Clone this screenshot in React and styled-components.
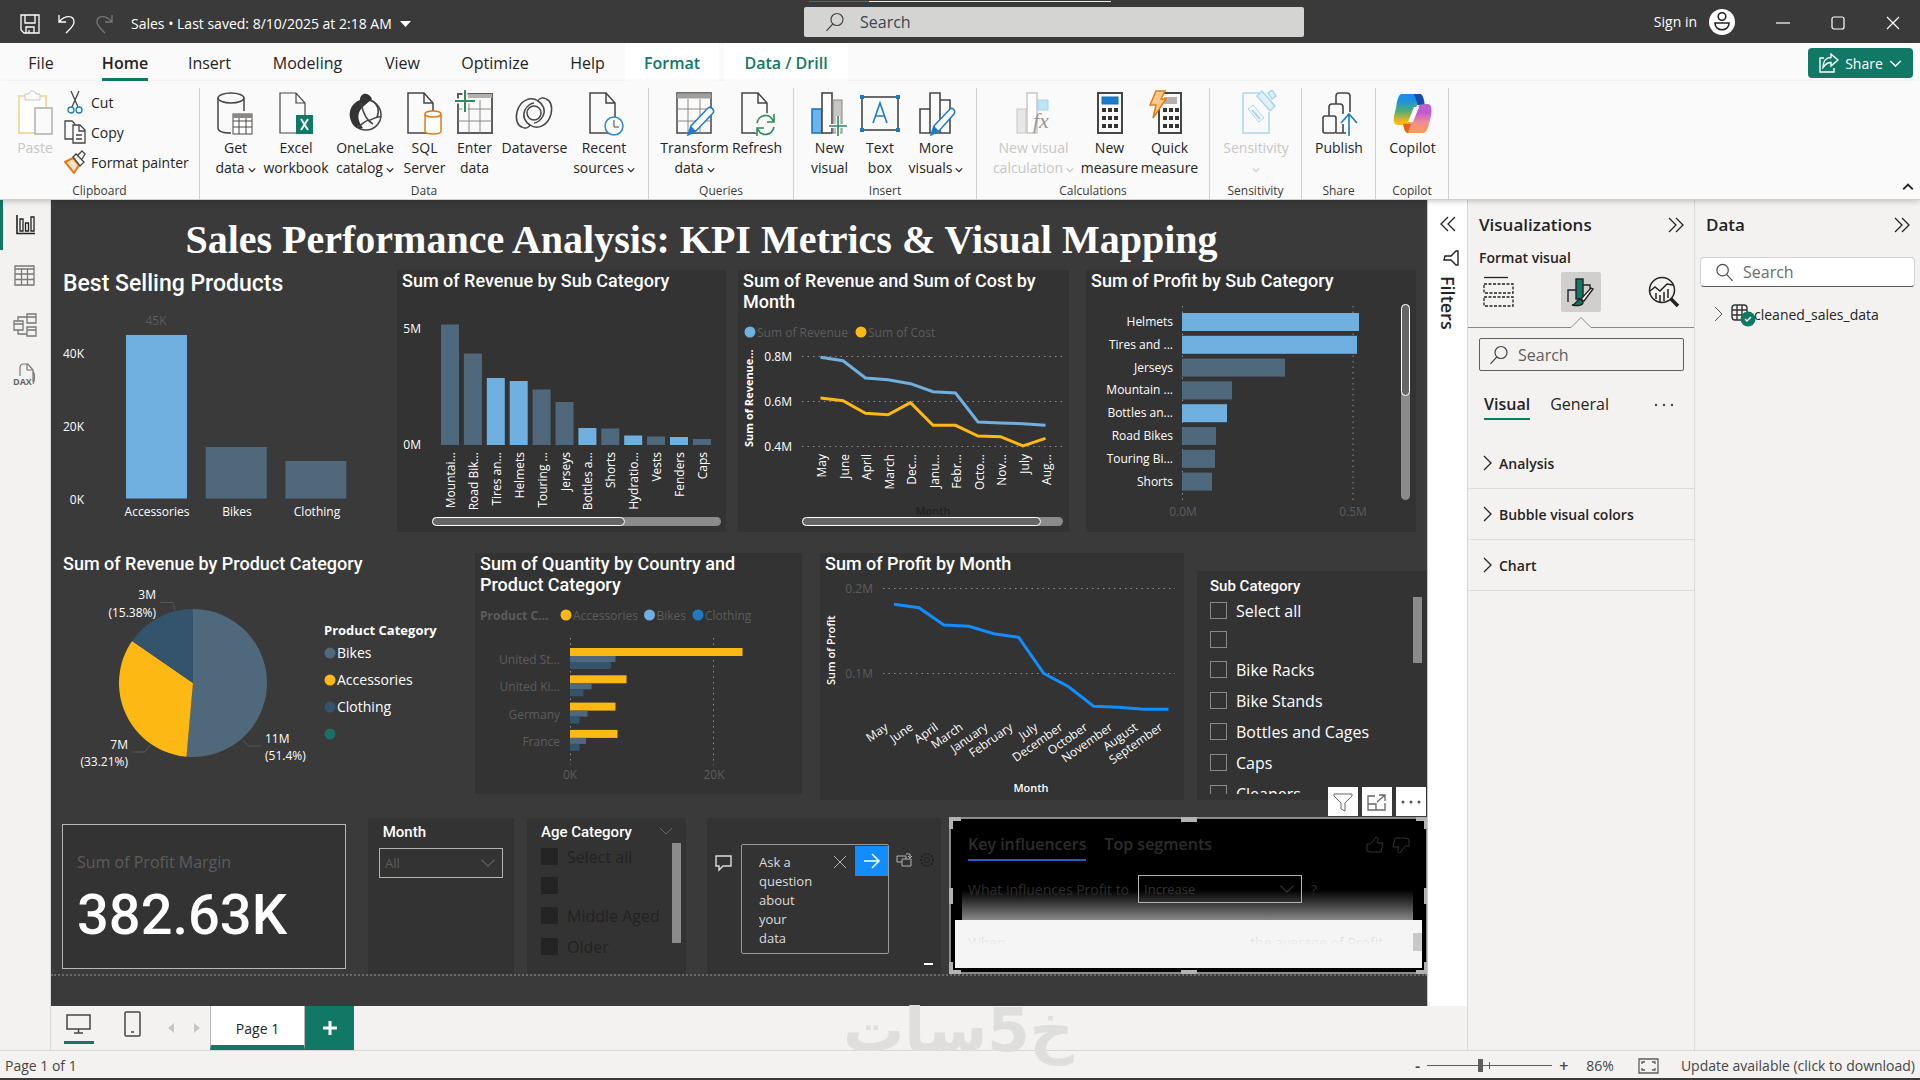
import React from "react";
import styled, { createGlobalStyle, css } from "styled-components";

const UI = '"Open Sans", "Noto Sans", sans-serif';
const DIN = 'Roboto, "Noto Sans", sans-serif';

const c = {
  ink: "#252423",
  green: "#117865",
  chrome: "#3a3a3a",
  pane: "#f3f2f1",
  line: "#d8d8d8",
  page: "#3a3a3a",
  panel: "#333333",
  dim: "#5c5c5c",
  light: "#70b0e0",
  dark: "#50687c",
  navy: "#34536c",
  gold: "#fdb813",
  blue: "#118dff",
};

const GlobalStyle = createGlobalStyle`
  * { box-sizing: border-box; }
  body { margin: 0; font-family: ${UI}; font-size: 14px; color: ${c.ink}; background: ${c.pane}; }
  button, input, select, textarea { font-family: inherit; color: inherit; margin: 0; }
  button { background: none; border: 0; padding: 0; cursor: pointer; }
  svg { display: block; flex: none; }
`;

const Shell = styled.div`
  min-height: 100vh;
  display: flex;
  flex-direction: column;
  border-bottom: 2px solid ${c.chrome};
`;

/* ---------- title bar ---------- */
const TitleBar = styled.header`
  height: 43px;
  background: ${c.chrome};
  color: #fff;
  display: grid;
  grid-template-columns: 804fr 500fr 616fr;
  align-items: center;
`;
const TitleLeft = styled.div`
  display: flex;
  align-items: center;
  padding: 4px 0 0 20px;
  gap: 17px;
`;
const IconButton = styled.button`
  display: flex;
  align-items: center;
  justify-content: center;
`;
const FileName = styled.button`
  display: flex;
  align-items: center;
  gap: 8px;
  font-size: 14px;
  white-space: nowrap;
`;
const TitleSearch = styled.label`
  height: 30px;
  background: #d4d4d2;
  border-radius: 2px;
  display: flex;
  align-items: center;
  padding-left: 21px;
  gap: 13px;
  position: relative;
  color: ${c.ink};
`;
const LoadStripe = styled.span`
  position: absolute;
  left: 5px;
  top: -6px;
  width: 302px;
  height: 1px;
  background: linear-gradient(90deg, #1a76c4 60px, #e8f0ee 60px);
`;
const BareInput = styled.input`
  flex: 1;
  min-width: 0;
  border: 0;
  outline: 0;
  background: transparent;
  font-size: 16px;
  &::placeholder { color: ${(p) => p.$hint || "#3b4654"}; opacity: 1; }
`;
const TitleRight = styled.div`
  display: flex;
  align-items: center;
  justify-content: flex-end;
  padding-right: 20px;
`;
const SignIn = styled.button`
  display: flex;
  align-items: center;
  gap: 12px;
  font-size: 14px;
  margin-right: 41px;
`;
const WindowButtons = styled.div`
  display: flex;
  gap: 41px;
  padding-top: 3px;
`;

/* ---------- ribbon ---------- */
const TabRow = styled.nav`
  height: 38px;
  background: #fafafa;
  display: flex;
  padding: 0 7px 0 1px;
`;
const Tab = styled.button`
  width: ${(p) => p.$w}px;
  font-size: 16px;
  display: flex;
  justify-content: center;
  span { padding-top: 8px; line-height: 24px; height: 38px; }
  ${(p) => p.$active && css`
    font-weight: 600;
    span { border-bottom: 3px solid ${c.green}; }
  `}
  ${(p) => p.$context && css`
    font-weight: 600;
    color: ${c.green};
    background: #fff;
    margin-right: 5px;
  `}
`;
const ShareButton = styled.button`
  margin: 5px 0 0 auto;
  align-self: flex-start;
  width: 105px;
  height: 30px;
  border-radius: 4px;
  background: ${c.green};
  color: #fff;
  font-size: 14px;
  display: flex;
  align-items: center;
  justify-content: center;
  gap: 6px;
`;
const Ribbon = styled.section`
  height: 119px;
  background: #fafafa;
  border-bottom: 1px solid #d0d0d0;
  display: flex;
  position: relative;
  z-index: 2;
  box-shadow: 0 2px 5px rgba(0, 0, 0, 0.18);
`;
const Group = styled.div`
  width: ${(p) => p.$w}px;
  margin-top: 7px;
  border-right: 1px solid #d0d0d0;
  display: flex;
  flex-direction: column;
  justify-content: space-between;
`;
const GroupBody = styled.div`
  display: flex;
  padding: 2px 0 0 10px;
`;
const GroupName = styled.div`
  font-size: 12px;
  line-height: 16px;
  text-align: center;
  color: #3b3a39;
`;
const Tool = styled.button`
  width: ${(p) => p.$w}px;
  display: flex;
  flex-direction: column;
  align-items: center;
  font-size: 14px;
  line-height: 20px;
  white-space: nowrap;
  color: ${(p) => (p.disabled ? "#c8c6c4" : c.ink)};
  svg { margin-bottom: 2px; }
  span { display: flex; align-items: center; gap: 3px; min-height: 20px; }
  span svg { margin: 4px 0 0; }
`;
const ClipList = styled.div`
  display: flex;
  flex-direction: column;
  padding-left: 4px;
  margin-top: -3px;
`;
const ClipItem = styled.button`
  display: flex;
  align-items: center;
  gap: 5px;
  height: 30px;
  font-size: 14px;
  white-space: nowrap;
`;
const Collapse = styled(IconButton)`
  margin: auto 6px 6px auto;
`;

/* ---------- body ---------- */
const Main = styled.main`
  flex: 1;
  display: flex;
  min-height: 0;
`;
const Rail = styled.nav`
  width: 51px;
  flex: none;
  border-right: 1px solid ${c.line};
`;
const RailButton = styled.button`
  width: 50px;
  height: 50px;
  display: flex;
  align-items: center;
  justify-content: center;
  border-left: 3px solid ${(p) => (p.$active ? c.green : "transparent")};
  padding-right: 4px;
`;
const Center = styled.div`
  flex: 1;
  min-width: 0;
  display: flex;
  flex-direction: column;
`;
const Work = styled.div`
  flex: 1;
  display: flex;
`;
const Canvas = styled.div`
  flex: 1;
  min-width: 0;
  background: ${c.page};
  color: #fff;
`;
const ReportPage = styled.div`
  border-bottom: 2px dotted #6a6a6a;
`;
const PageTitle = styled.h1`
  margin: 0;
  padding: 16px 75px 7px 0;
  font: bold 40px/47px "Liberation Serif", serif;
  text-align: center;
  white-space: nowrap;
`;
const Row = styled.div`
  display: flex;
  align-items: flex-start;
  padding: 0 ${(p) => p.$pr || 0}px 0 11px;
  margin-bottom: ${(p) => p.$mb || 0}px;
`;
const Panel = styled.section`
  flex: ${(p) => p.$w} 1 ${(p) => p.$w}px;
  min-width: 0;
  margin: ${(p) => p.$mt || 0}px 0 0 ${(p) => p.$ml || 0}px;
  background: ${(p) => (p.$plain ? "transparent" : c.panel)};
`;
const Heading = styled.h2`
  margin: 0;
  padding: 0 0 0 ${(p) => (p.$plain ? 1 : 5)}px;
  font: 500 18px/21px ${DIN};
  ${(p) => p.$big && css`font: 500 23px/28px ${DIN};`}
`;
const Chart = styled.svg`
  width: 100%;
  font-family: ${UI};
  font-size: 12px;
`;

/* slicers */
const SlicerHead = styled.h3`
  margin: 0;
  font: 500 15px/20px ${DIN};
  display: flex;
  justify-content: space-between;
`;
const Slicer = styled(Panel)`
  padding: ${(p) => p.$pad};
  height: ${(p) => p.$h}px;
`;
const SlicerBody = styled.div`
  display: flex;
  justify-content: space-between;
  height: ${(p) => p.$h}px;
  overflow: hidden;
`;
const CheckRow = styled.label`
  display: flex;
  align-items: center;
  gap: 9px;
  height: ${(p) => p.$h}px;
  font-size: 16px;
  white-space: nowrap;
  color: ${(p) => (p.$dim ? "#222" : "#fff")};
  input {
    appearance: none;
    width: 17px;
    height: 17px;
    border: 1px solid ${(p) => (p.$dim ? "#242424" : "#8a8a8a")};
    background: ${(p) => (p.$dim ? "#242424" : "transparent")};
  }
`;
const Scroller = styled.div`
  flex: none;
  width: 9px;
  height: ${(p) => p.$h}px;
  margin-top: ${(p) => p.$mt}px;
  background: ${(p) => p.$tone || "#8b8b8b"};
`;
const Card = styled(Panel)`
  height: 145px;
  border: 1px solid #b8b8b8;
  padding: 25px 14px 0;
`;
const CardLabel = styled.div`
  font-size: 16px;
  line-height: 24px;
  color: #5c5c5c;
`;
const CardValue = styled.div`
  font: 500 56px/64px ${DIN};
  padding-top: 9px;
`;
const SelectBox = styled.div`
  display: flex;
  align-items: center;
  width: ${(p) => p.$w};
  height: ${(p) => p.$h}px;
  margin-top: ${(p) => p.$mt || 0}px;
  border: 1px solid #b3b3b3;
  color: ${(p) => p.$color};
  select {
    appearance: none;
    flex: 1;
    min-width: 0;
    height: 100%;
    border: 0;
    outline: 0;
    background: transparent;
    padding: 0 5px;
    font-size: 13px;
  }
  svg { margin: 0 6px 0 -24px; pointer-events: none; }
`;
const QnA = styled(Panel)`
  height: 156px;
  display: flex;
  align-items: flex-start;
  padding: 26px 7px 0 8px;
`;
const QBox = styled.div`
  flex: 1;
  min-width: 0;
  height: 110px;
  margin-left: 8px;
  border: 1px solid #9a9a9a;
  border-radius: 2px;
  display: flex;
  align-items: flex-start;
  padding: 1px 0 0 17px;
  textarea {
    flex: 1;
    min-width: 0;
    height: 106px;
    border: 0;
    outline: 0;
    resize: none;
    overflow: hidden;
    background: transparent;
    color: #dcdcdc;
    font-size: 13px;
    line-height: 19px;
    padding: 7px 0 0;
  }
`;
const Go = styled(IconButton)`
  width: 33px;
  height: 30px;
  background: ${c.blue};
  margin-left: 8px;
`;
const QClear = styled(IconButton)`
  height: 32px;
`;
const QSide = styled.div`
  display: flex;
  flex-direction: column;
  justify-content: space-between;
  align-items: flex-end;
  height: 122px;
  padding: 8px 0 0 7px;
  div { display: flex; gap: 7px; }
`;
const Key = styled(Panel)`
  height: 157px;
  background: #000;
  border: 2px solid #8a8a8a;
  border-right-width: 1px;
  position: relative;
  color: #2c2c2c;
`;
const Grip = styled.i`
  position: absolute;
  width: ${(p) => p.$w}px;
  height: ${(p) => p.$h}px;
  background: #b3b3b3;
  top: ${(p) => p.$t};
  left: ${(p) => p.$l};
`;
const VisualMenu = styled.div`
  position: absolute;
  right: 0;
  top: -32px;
  display: flex;
  gap: 4px;
  button { width: 30px; height: 29px; background: #fff; }
`;
const KeyTop = styled.div`
  height: 101px;
  padding: 10px 16px 0 17px;
  position: relative;
`;
const KeyTabs = styled.div`
  display: flex;
  align-items: center;
  gap: 18px;
`;
const KeyTab = styled.button`
  height: 32px;
  font-weight: 600;
  font-size: 16px;
  white-space: nowrap;
  border-bottom: 2px solid ${(p) => (p.$active ? "#1f5fc0" : "transparent")};
`;
const Thumbs = styled.div`
  margin-left: auto;
  display: flex;
  gap: 8px;
`;
const KeyFade = styled.div`
  position: absolute;
  left: 11px;
  right: 13px;
  bottom: 0;
  height: 30px;
  background: linear-gradient(#000, #333 40%, #888);
`;
const KeyQuestion = styled.div`
  position: relative;
  display: flex;
  align-items: center;
  gap: 9px;
  padding-top: 14px;
  font-size: 14px;
  white-space: nowrap;
`;
const KeyResult = styled.div`
  margin: 0 4px;
  height: 48px;
  background: #f5f5f5;
  display: flex;
  align-items: flex-start;
  padding: 13px 0 0 13px;
  font-size: 14px;
  line-height: 20px;
  white-space: nowrap;
`;
const Faded = styled.span`
  height: 12px;
  overflow: hidden;
  flex: ${(p) => p.$w} 1 0;
  color: transparent;
  background: linear-gradient(#ccc, #f3f3f3);
  background-clip: text;
`;

/* filters */
const Filters = styled.aside`
  width: 41px;
  flex: none;
  background: #fff;
  border-left: 1px solid #c8c8c8;
  border-right: 1px solid ${c.line};
  display: flex;
  flex-direction: column;
  align-items: center;
  gap: 18px;
  padding-top: 16px;
`;
const FilterFlag = styled.span`
  padding-left: 6px;
`;
const FiltersLabel = styled.div`
  writing-mode: vertical-rl;
  font-size: 18px;
  font-weight: 600;
  line-height: 20px;
  margin-top: -8px;
`;

/* page tabs */
const PageTabs = styled.nav`
  height: 44px;
  display: flex;
  align-items: stretch;
  border-right: 1px solid ${c.line};
  padding-left: 13px;
  position: relative;
`;
const ViewButton = styled(IconButton)`
  width: 30px;
  height: 38px;
  margin-right: ${(p) => p.$mr}px;
  border-bottom: 3px solid ${(p) => (p.$active ? c.green : "transparent")};
`;
const PageArrow = styled(IconButton)`
  width: 26px;
`;
const PageTab = styled.button`
  width: 95px;
  background: #fff;
  border-left: 1px solid #b8b8b8;
  border-right: 1px solid #b8b8b8;
  border-bottom: 5px solid ${c.green};
  font-size: 14px;
  padding-top: 5px;
`;
const AddPage = styled(IconButton)`
  width: 49px;
  background: ${c.green};
`;
const Watermark = styled.div`
  position: absolute;
  left: 792px;
  top: -12px;
  z-index: 3;
  direction: rtl;
  font: bold 61px/72px "DejaVu Sans", sans-serif;
  color: #dededd;
  white-space: nowrap;
  pointer-events: none;
`;

/* right panes */
const Pane = styled.aside`
  width: ${(p) => p.$w}px;
  flex: none;
  border-right: ${(p) => (p.$last ? 0 : 1)}px solid ${c.line};
`;
const PaneHead = styled.div`
  display: flex;
  align-items: center;
  justify-content: space-between;
  height: 49px;
  padding: 1px 10px 0 11px;
  h2 { margin: 0; font: 600 17px/24px ${UI}; }
`;
const SubHead = styled.div`
  font-weight: 600;
  font-size: 14px;
  line-height: 18px;
  padding: 0 11px 5px;
`;
const ModeRow = styled.div`
  display: flex;
  justify-content: space-between;
  align-items: center;
  padding: 0 10px 4px;
`;
const Mode = styled(IconButton)`
  width: 40px;
  height: 40px;
  border-radius: 2px;
  background: ${(p) => (p.$active ? "#d0cfce" : "transparent")};
`;
const PaneSearch = styled.label`
  display: flex;
  align-items: center;
  gap: 7px;
  height: 33px;
  margin: 10px 10px 0 11px;
  padding: 0 9px;
  border: 1px solid #605e5c;
  border-radius: 2px;
`;
const DataSearch = styled(PaneSearch)`
  height: 30px;
  margin: 8px 5px 0;
  padding: 0 14px;
  background: #fff;
  border-color: #d1d1d1;
  border-bottom-color: #605e5c;
  border-radius: 4px;
`;
const VizTabs = styled.div`
  display: flex;
  align-items: center;
  gap: 20px;
  padding: 18px 20px 18px 16px;
  > svg { margin-left: auto; }
`;
const VizTab = styled.button`
  font-size: 16px;
  height: 31px;
  font-weight: ${(p) => (p.$active ? 600 : 400)};
  border-bottom: 2px solid ${(p) => (p.$active ? c.green : "transparent")};
`;
const Section = styled.button`
  width: 100%;
  height: 51px;
  display: flex;
  align-items: center;
  gap: 7px;
  padding-left: 15px;
  border-bottom: 1px solid #dcdcdc;
  font-size: 14px;
  font-weight: 600;
`;
const TreeRow = styled.button`
  display: flex;
  align-items: center;
  gap: 8px;
  height: 30px;
  margin-top: 12px;
  padding-left: 19px;
  font-size: 14px;
  svg + svg { margin-right: -10px; }
`;

/* status bar */
const Status = styled.footer`
  height: 28px;
  border-top: 1px solid ${c.line};
  display: flex;
  align-items: center;
  padding: 2px 5px 0;
  font-size: 14px;
  color: #484644;
`;
const Zoom = styled.div`
  margin-left: auto;
  display: flex;
  align-items: center;
  gap: 7px;
  margin-right: 18px;
  button { font-size: 16px; line-height: 20px; font-weight: 600; }
`;
const Slider = styled.input`
  appearance: none;
  width: 125px;
  height: 14px;
  background: linear-gradient(#605e5c, #605e5c) center / 100% 1px no-repeat,
    linear-gradient(#605e5c, #605e5c) 62px center / 1px 7px no-repeat;
  &::-webkit-slider-thumb {
    appearance: none;
    width: 5px;
    height: 13px;
    background: #605e5c;
  }
`;
const FitButton = styled(IconButton)`
  margin-left: 24px;
`;
const StatusLink = styled.a`
  color: inherit;
  text-decoration: none;
  margin-left: 22px;
`;

/* ---------- icons ---------- */
const Ico = ({ w = 20, h = w, vb, children, s = "currentColor", sw = 1, ...r }) => (
  <svg width={w} height={h} viewBox={vb || `0 0 ${w} ${h}`} fill="none" stroke={s} strokeWidth={sw} aria-hidden="true" {...r}>{children}</svg>
);
const Chevron = ({ dir = "down", w = 8, sw = 1.5 }) => {
  const rot = { down: 0, up: 180, right: -90, left: 90 }[dir];
  return <Ico w={w} vb="0 0 10 10" sw={sw}><path d="M1 3l4 4 4-4" transform={`rotate(${rot} 5 5)`} /></Ico>;
};
const Lens = ({ flip, s = "#484644", w = 20 }) => (
  <Ico w={w} vb="0 0 20 20" s={s} sw={1.2}>
    <g transform={flip ? "translate(20 0) scale(-1 1)" : ""}><circle cx="8" cy="7.5" r="6" /><path d="M12.2 12l6.3 6.8" /></g>
  </Ico>
);
const Doubles = ({ left }) => (
  <Ico w={16} sw={1.3}><path d={left ? "M8 1L1 8l7 7M15 1L8 8l7 7" : "M1 1l7 7-7 7M8 1l7 7-7 7"} /></Ico>
);
const G = "#484644";
const toolIcons = {
  paste: <><path d="M4 6h27v37H4z" stroke="#f3dca6" fill="#fff" strokeWidth="2" /><path d="M10 4h4c0-4 7-4 7 0h4v6H10z" stroke="#c8c6c4" fill="#fafafa" /><path d="M20 18h17v26H20z" stroke="#b3b0ad" fill="#fafafa" strokeWidth="1.500" /></>,
  db: <><ellipse cx="16" cy="8" rx="13" ry="5" strokeWidth="1.500" /><path d="M3 8v30c0 3 5 5 13 5M29 8v13" strokeWidth="1.500" /><rect x="18" y="24" width="19" height="20" fill="#fff" /><path d="M18 26h19" strokeWidth="4" stroke="#8a8886" /><path d="M18 31h19M18 37h19M24 28v16M31 28v16" /></>,
  excel: <><path d="M4 3h16l9 10v30H4zM20 3v10h9" strokeWidth="1.200" /><rect x="20" y="25" width="17" height="19" fill={c.green} stroke="none" /><path d="M25 29l7 11M32 29l-7 11" stroke="#fff" strokeWidth="2" /></>,
  lake: <><circle cx="21" cy="25" r="15" strokeWidth="1.500" /><path d="M20 15L27 9C23 1 15 3 15 10 5 14 1 25 9 36c3 3 6 3 9 2-6-8-7-16 2-23z" fill="#333" stroke="none" /><path d="M16 13c2 10 6 18 12 21M12 37c5-1 7-7 13-7 4-1 7-4 11-3" strokeWidth="1.500" /><path d="M26 10c7 4 9 11 6 17" strokeWidth="1.500" /></>,
  sql: <><path d="M4 3h16l9 10v30H4zM20 3v10h9" strokeWidth="1.500" /><path d="M21 24v17c0 2 3 3 8 3s8-1 8-3V24" fill="#fff" stroke="#e07b1a" strokeWidth="1.500" /><ellipse cx="29" cy="24" rx="8" ry="3" fill="#fff" stroke="#e07b1a" strokeWidth="1.500" /></>,
  enter: <><rect x="4" y="4" width="34" height="39" strokeWidth="2" stroke="#605e5c" /><path d="M14 6h24" strokeWidth="4" stroke="#b3b0ad" /><path d="M4 19h34M4 31h34M15 12v31M26 10v33" stroke="#8a8886" /><path d="M11 0v22M1 11h20" stroke="#fafafa" strokeWidth="5" /><path d="M11 0v22M1 11h20" stroke="#2f8a5c" strokeWidth="2" /></>,
  verse: <g strokeWidth="1.500" transform="translate(0 -1)"><circle cx="20" cy="24" r="7" /><path d="M32 10c-3-2-7-1-8 2 5 3 8 9 5 15-2 4-6 7-9 7M8 38c3 2 7 1 8-2-5-3-8-9-5-15 2-4 6-7 9-7" /><path d="M24 12C17 7 6 11 3 23c-2 8 1 14 5 15M16 36c7 5 18 1 21-11 2-8-1-14-5-15" /></g>,
  recent: <><path d="M6 3h16l9 10v30H6zM22 3v10h9" strokeWidth="1.500" /><circle cx="30" cy="36" r="9" fill="#fafafa" stroke="#2b88d8" strokeWidth="1.500" /><path d="M30 30v7h5" /></>,
  transform: <><rect x="3" y="3" width="34" height="40" strokeWidth="1.500" /><path d="M3 6h34" stroke="#a19f9d" strokeWidth="5" /><path d="M3 19h34M3 31h34M14 9v34M26 9v34" stroke="#8a8886" /><path d="M14 45l3-9 17-18c3-2 7 2 5 5L22 41z" fill="#fff" stroke="#1a7cc9" strokeWidth="1.500" /><path d="M14 45l3-9 5 5z" fill="#1a7cc9" stroke="none" /></>,
  refresh: <><path d="M5 3h16l9 10v30H5zM21 3v10h9" strokeWidth="1.500" /><circle cx="28" cy="35" r="12" fill="#fafafa" stroke="none" /><path d="M20 33c2-9 13-10 16-2m1-7v8h-7M37 37c-2 9-13 10-16 2m-1 7v-8h7" stroke="#2f8a5c" strokeWidth="1.600" /></>,
  newvis: <><rect x="3" y="19" width="10" height="24" fill="#6cb4ee" stroke="#1a6fb8" strokeWidth="1.500" /><rect x="13" y="3" width="10" height="40" fill="#fff" strokeWidth="1.600" /><rect x="24" y="10" width="9" height="33" fill="#c8c6c4" stroke="#8a8886" /><path d="M29 26v20M20 36h18" stroke="#fafafa" strokeWidth="4" /><path d="M29 26v20M20 36h18" stroke="#2f8a5c" strokeWidth="1.600" /></>,
  textbox: <><rect x="2" y="7" width="36" height="33" strokeWidth="1.600" /><path d="M13 33l7-20 7 20M16 26h8" stroke="#1a7cc9" strokeWidth="1.600" /><path d="M0 5h4v4H0zM36 5h4v4h-4zM0 38h4v4H0zM36 38h4v4h-4z" fill="#1a7cc9" stroke="none" /></>,
  more: <><path d="M4 19h10v24H4zM14 3h10v40H14zM24 10h10v33H24z" strokeWidth="1.600" /><path d="M15 45l3-9 16-17c3-2 6 2 4 5L23 41z" fill="#fff" stroke="#1a7cc9" strokeWidth="1.500" /><path d="M15 45l3-9 5 5z" fill="#1a7cc9" stroke="none" /></>,
  calc: <g stroke="#c8c6c4"><rect x="4" y="19" width="9" height="24" fill="#e8e8e8" /><rect x="14" y="3" width="10" height="40" fill="#fff" strokeWidth="1.500" /><path d="M25 10h10v10H25z" fill="#bfe4f5" stroke="#a5d5ec" /><text x="20" y="38" fill="#9a9896" stroke="none" fontSize="22" fontStyle="italic" fontFamily="Liberation Serif, serif">fx</text></g>,
  measure: <><rect x="9" y="3" width="24" height="40" strokeWidth="2" /><rect x="13" y="7" width="16" height="7" fill="#1a7cc9" stroke="#1a6fb8" /><path d="M13 20h4M19 20h4M25 20h4M13 28h4M19 28h4M25 28h4M13 36h4M19 36h4M25 36h4" stroke="#333" strokeWidth="4" /></>,
  quick: <><rect x="10" y="3" width="22" height="40" strokeWidth="2" /><rect x="15" y="7" width="13" height="7" fill="#b3b0ad" stroke="none" /><path d="M14 20h4M20 20h4M26 20h4M14 28h4M20 28h4M26 28h4M14 36h4M20 36h4M26 36h4" stroke="#333" strokeWidth="4" /><path d="M7 1h9l-4 8h5L4 28l3-13H1z" fill="#ffc98c" stroke="#e07b1a" strokeWidth="1.500" /></>,
  sens: <g stroke="#a9d7ee"><path d="M7 3h16M7 3v40h26V22" strokeWidth="1.500" /><path d="M12 19l5-4 11 13-5 4z" /><path d="M16 20l8 9" strokeWidth="2" /><path d="M21 6l5-5 13 15-5 5zM32 3l4-3 4 6-4 3z" fill="#dff0f9" strokeWidth="1.500" /></g>,
  publish: <g strokeWidth="1.600"><rect x="4" y="26" width="13" height="17" rx="2" /><path d="M10 26V17c0-2 1-3 3-3h8c2 0 3 1 3 3v7M17 14V6c0-2 1-3 3-3h8c2 0 3 1 3 3v16M17 43h10M24 34v9" /><path d="M30 46V24M22 33l8-9 8 9" stroke="#1a7cc9" /></g>,
  copilot: <g stroke="none"><path d="M10 4h18c3 0 4 5 5 11h-8l-6 16c-1 3-3 4-6 4H7c-7 0-6-6-3-17C5 12 6 4 10 4z" fill="url(#cpA)" /><path d="M31 43H17c-4 0-5-6-6-10h6c3 0 4-3 5-6l4-10c1-2 3-3 5-3h4c6 0 5 8 3 16s-3 13-7 13z" fill="url(#cpB)" /><path d="M22 17h5l-6 15h-5z" fill="#fff" /><path d="M22 4h6c2 0 4 5 4 10l-6 1z" fill="#1b4aa8" /><path d="M11 34h8l-3 9c-3 0-4-4-5-9z" fill="#e2621b" /></g>,
};
const ToolIcon = ({ n }) => <Ico w={41} h={46} s={G}>{toolIcons[n]}</Ico>;

/* ---------- data ---------- */
const groups = [
  { name: "Data", w: 449, items: [["db", 51, "Get", "data", 1], ["excel", 70, "Excel", "workbook"], ["lake", 68, "OneLake", "catalog", 1], ["sql", 51, "SQL", "Server"], ["enter", 49, "Enter", "data"], ["verse", 71, "Dataverse"], ["recent", 68, "Recent", "sources", 1]] },
  { name: "Queries", w: 145, items: [["transform", 71, "Transform", "data", 1], ["refresh", 54, "Refresh"]] },
  { name: "Insert", w: 183, items: [["newvis", 51, "New", "visual"], ["textbox", 50, "Text", "box"], ["more", 62, "More", "visuals", 1]] },
  { name: "Calculations", w: 233, items: [["calc", 93, "New visual", "calculation", 1, 1], ["measure", 59, "New", "measure"], ["quick", 61, "Quick", "measure"]] },
  { name: "Sensitivity", w: 92, items: [["sens", 72, "Sensitivity", "", 1, 1]] },
  { name: "Share", w: 74, items: [["publish", 54, "Publish"]] },
  { name: "Copilot", w: 73, items: [["copilot", 53, "Copilot"]] },
];
const best = [["Accessories", 335, c.light], ["Bikes", 447, c.dark], ["Clothing", 461, c.dark]];
const revenue = [["Mountai...", 324.5], ["Road Bik...", 353.5], ["Tires an...", 378, 1], ["Helmets", 381, 1], ["Touring ...", 389.5], ["Jerseys", 402], ["Bottles a...", 428, 1], ["Shorts", 428.5], ["Hydratio...", 435.5, 1], ["Vests", 436.5], ["Fenders", 437, 1], ["Caps", 439]];
const months = ["May", "June", "April", "March", "Dec...", "Janu...", "Febr...", "Octo...", "Nov...", "July", "Aug..."];
const revLine = [357.3, 360.7, 378, 379.7, 383.7, 391.7, 393, 422, 423, 423.7, 425.3];
const costLine = [398, 400.7, 413.3, 414.7, 402.7, 425.3, 425.3, 436, 436.7, 446, 438.3];
const profitSub = [["Helmets", 177, 1], ["Tires and ...", 175, 1], ["Jerseys", 103], ["Mountain ...", 50], ["Bottles an...", 45, 1], ["Road Bikes", 34], ["Touring Bi...", 33], ["Shorts", 30]];
const countries = [["United St...", 172.5, 45.5, 41], ["United Ki...", 56.5, 21.5, 13.5], ["Germany", 45.5, 17.5, 9.5], ["France", 47.5, 16, 9.5]];
const profitMonths = [["May", 604.3], ["June", 607.7], ["April", 625], ["March", 626.3], ["January", 633.7], ["February", 637.3], ["July", 673.3], ["December", 686.7], ["October", 706.3], ["November", 707.3], ["August", 709.3], ["September", 709.3]];
const pts = (arr, x0, dx) => arr.map((y, i) => `${x0 + dx * i},${y}`).join(" ");
const wedge = (a, b) => {
  const p = (t) => `${193 + 74 * Math.sin(t * 2 * Math.PI)} ${683 - 74 * Math.cos(t * 2 * Math.PI)}`;
  return `M193 683L${p(a)}A74 74 0 ${b - a > 0.5 ? 1 : 0} 1 ${p(b)}Z`;
};
const ScrollH = ({ x, y, w, t }) => (
  <g><rect x={x} y={y} width={w} height="9" rx="4.500" fill="#8b8b8b" /><rect x={x + 0.5} y={y + 0.5} width={t} height="8" rx="4" fill="#666" stroke="#fff" /></g>
);
const Dots = (p) => <line {...p} stroke="#8c8c8c" strokeWidth="1" strokeDasharray="1.500 4" />;

const BestSelling = () => (
  <Chart height="234" viewBox="62 298 319 234" fill="#fff">
    {["40K", "20K", "0K"].map((t, i) => <text key={t} x="84" y={358 + 73 * i} textAnchor="end">{t}</text>)}
    {best.map(([n, y, f], i) => (
      <g key={n}><rect x={126 + 79.700 * i} y={y} width="61" height={498.5 - y} fill={f} /><text x={157 + 80 * i} y="516" textAnchor="middle">{n}</text></g>
    ))}
    <text x="156" y="325" textAnchor="middle" fill={c.dim}>45K</text>
  </Chart>
);
const RevenueBars = () => (
  <Chart height="241" viewBox="397 291 329 241" fill="#fff">
    <text x="421" y="333" textAnchor="end">5M</text><text x="421" y="449" textAnchor="end">0M</text>
    {revenue.map(([n, y, l], i) => (
      <g key={n}>
        <rect x={441 + 22.900 * i} y={y} width="18" height={445 - y} fill={l ? c.light : c.dark} />
        <text transform={`translate(${455 + 22.900 * i} 452) rotate(-90)`} textAnchor="end">{n}</text>
      </g>
    ))}
    <ScrollH x={432} y={517} w={289} t={192} />
  </Chart>
);
const RevenueCost = () => (
  <Chart height="220" viewBox="738 312 331 220" fill="#fff">
    <circle cx="750" cy="332" r="5.500" fill={c.light} /><text x="757" y="337" fill={c.dim}>Sum of Revenue</text>
    <circle cx="861" cy="332" r="5.500" fill={c.gold} /><text x="868" y="337" fill={c.dim}>Sum of Cost</text>
    {[["0.8M", 356.5], ["0.6M", 401.5], ["0.4M", 446.5]].map(([t, y]) => <g key={t}><Dots x1="802" x2="1062" y1={y} y2={y} /><text x="792" y={y + 4} textAnchor="end">{t}</text></g>)}
    <text transform="translate(753 447) rotate(-90)" fontWeight="700" fontSize="11">Sum of Revenue...</text>
    <polyline points={pts(revLine, 820.5, 22.5)} fill="none" stroke={c.light} strokeWidth="3" />
    <polyline points={pts(costLine, 820.5, 22.5)} fill="none" stroke={c.gold} strokeWidth="3" />
    {months.map((m, i) => <text key={m} transform={`translate(${826 + 22.500 * i} 454) rotate(-90)`} textAnchor="end">{m}</text>)}
    <text x="933" y="515" textAnchor="middle" fill="#222" fontSize="11" fontWeight="600">Month</text>
    <ScrollH x={802} y={517} w={261} t={238} />
  </Chart>
);
const ProfitBars = () => (
  <Chart height="241" viewBox="1086 291 330 241" fill="#fff">
    <Dots x1="1182.500" x2="1182.500" y1="306" y2="502" /><Dots x1="1353" x2="1353" y1="306" y2="502" />
    {profitSub.map(([n, w, l], i) => (
      <g key={n}><rect x="1182" y={313 + 22.800 * i} width={w} height="18" fill={l ? c.light : c.dark} /><text x="1173" y={326 + 22.800 * i} textAnchor="end">{n}</text></g>
    ))}
    <g fill={c.dim} textAnchor="middle"><text x="1183" y="516">0.0M</text><text x="1353" y="516">0.5M</text></g>
    <rect x="1401" y="304" width="9" height="196" rx="4.500" fill="#8b8b8b" /><rect x="1401.500" y="304.500" width="8" height="91" rx="4" fill="#666" stroke="#fff" />
  </Chart>
);
const Pie = () => (
  <Chart height="226" viewBox="62 574 396 226" fill="#fff">
    <path d={wedge(0, 0.514)} fill={c.dark} /><path d={wedge(0.514, 0.8461)} fill={c.gold} /><path d={wedge(0.8461, 1)} fill={c.navy} />
    <path d="M160 602.500h13l2 8M243 740l5 6h13M150 745l-5 7h-13" fill="none" stroke="#555" />
    <g textAnchor="end"><text x="156" y="599">3M</text><text x="156" y="617">(15.38%)</text><text x="128" y="749">7M</text><text x="128" y="766">(33.21%)</text></g>
    <text x="265" y="743">11M</text><text x="265" y="760">(51.4%)</text>
    <text x="324" y="635" fontWeight="700" fontSize="13">Product Category</text>
    {[["Bikes", c.dark, 653], ["Accessories", c.gold, 680], ["Clothing", c.navy, 707], ["", "#1d6e66", 734]].map(([t, f, y]) => (
      <g key={y} fontSize="14"><circle cx="330" cy={y} r="5.500" fill={f} /><text x="337" y={y + 5}>{t}</text></g>
    ))}
  </Chart>
);
const Quantity = () => (
  <Chart height="199" viewBox="475 595 327 199" fill={c.dim}>
    <text x="480" y="620" fontWeight="700">Product C...</text>
    {[["Accessories", c.gold, 566], ["Bikes", c.light, 649.5], ["Clothing", "#1f7ac2", 698]].map(([t, f, x]) => <g key={t}><circle cx={x} cy="615" r="5.500" fill={f} /><text x={x + 7} y="620">{t}</text></g>)}
    <Dots x1="570.500" x2="570.500" y1="638" y2="765" /><Dots x1="713.500" x2="713.500" y1="638" y2="765" />
    {countries.map(([n, a, b, d], i) => (
      <g key={n} transform={`translate(0 ${27.300 * i})`}>
        <rect x="570" y="648" width={a} height="8" fill={c.gold} /><rect x="570" y="656" width={b} height="6" fill={c.dark} /><rect x="570" y="662" width={d} height="7" fill={c.navy} />
        <text x="560" y="664" textAnchor="end">{n}</text>
      </g>
    ))}
    <g textAnchor="middle"><text x="570" y="779">0K</text><text x="714" y="779">20K</text></g>
  </Chart>
);
const ProfitMonth = () => (
  <Chart height="226" viewBox="820 574 364 226" fill="#fff">
    {[["0.2M", 588.5], ["0.1M", 673.5]].map(([t, y]) => <g key={t}><Dots x1="883" x2="1175" y1={y} y2={y} /><text x="873" y={y + 4} textAnchor="end" fill={c.dim}>{t}</text></g>)}
    <text transform="translate(835 685) rotate(-90)" fontWeight="600" fontSize="11">Sum of Profit</text>
    <polyline points={pts(profitMonths.map((m) => m[1]), 894, 24.95)} fill="none" stroke={c.blue} strokeWidth="3" />
    {profitMonths.map(([m], i) => <text key={m} transform={`translate(${889 + 24.950 * i} 729) rotate(-35)`} textAnchor="end">{m}</text>)}
    <text x="1031" y="792" textAnchor="middle" fontSize="11" fontWeight="600">Month</text>
  </Chart>
);

const blanks = (t) => t || "(Blank)";

export default function App() {
  return (
    <Shell>
      <GlobalStyle />
      <TitleBar>
        <TitleLeft>
          <IconButton aria-label="Save"><Ico sw={1.3}><path d="M1 1h18v18H4l-3-3zM5 1v8h10V1M6 19v-6h8v6M9 19v-3" /></Ico></IconButton>
          <IconButton aria-label="Undo"><Ico sw={1.3}><path d="M2 1v7h7M2.500 7.500C8 1 17 1 17 8c0 4-4 7-8 11" /></Ico></IconButton>
          <IconButton aria-label="Redo"><Ico sw={1.3} s="#777"><path d="M18 1v7h-7M17.500 7.500C12 1 3 1 3 8c0 4 4 7 8 11" /></Ico></IconButton>
          <FileName>Sales • Last saved: 8/10/2025 at 2:18 AM <Ico w={11} h={6} s="none"><path d="M0 0h11L5.500 6z" fill="#fff" /></Ico></FileName>
        </TitleLeft>
        <TitleSearch><LoadStripe /><Lens flip /><BareInput placeholder="Search" aria-label="Search" /></TitleSearch>
        <TitleRight>
          <SignIn>Sign in <Ico w={26} s="#222" sw={1.6}><circle cx="13" cy="13" r="13" fill="#fff" stroke="none" /><circle cx="13" cy="7.500" r="3.800" /><path d="M6 14h14c0 9-14 9-14 0z" /></Ico></SignIn>
          <WindowButtons>
            <IconButton aria-label="Minimize"><Ico w={14} sw={1.2}><path d="M0 7h14" /></Ico></IconButton>
            <IconButton aria-label="Maximize"><Ico w={14} sw={1.2}><rect x="1" y="1" width="12" height="12" rx="2" /></Ico></IconButton>
            <IconButton aria-label="Close"><Ico w={14} sw={1.2}><path d="M1 1l12 12M13 1L1 13" /></Ico></IconButton>
          </WindowButtons>
        </TitleRight>
      </TitleBar>

      <TabRow>
        {[["File", 80], ["Home", 88], ["Insert", 81], ["Modeling", 115], ["View", 75], ["Optimize", 110], ["Help", 75]].map(([t, w]) => <Tab key={t} $w={w} $active={t === "Home"}><span>{t}</span></Tab>)}
        <Tab $w={94} $context><span>Format</span></Tab>
        <Tab $w={124} $context><span>Data / Drill</span></Tab>
        <ShareButton><Ico sw={1.4}><path d="M5 5H1v14h14v-4M12 1l7 6-7 6V9.500c-4 0-6 2-8 5 0-6 3-10 8-10z" /></Ico>Share <Chevron w={13} sw={1.1} /></ShareButton>
      </TabRow>

      <Ribbon>
        <Group $w={200}>
          <GroupBody>
            <Tool $w={50} disabled><ToolIcon n="paste" /><span>Paste</span></Tool>
            <ClipList>
              <ClipItem><Ico w={22} h={24} s={G} sw={1.3}><path d="M7 1l7 16M15 1L8 17" /><circle cx="7" cy="20" r="3" stroke="#1a7cc9" /><circle cx="15" cy="20" r="3" stroke="#1a7cc9" /></Ico>Cut</ClipItem>
              <ClipItem><Ico w={22} h={24} s={G} sw={1.3}><path d="M9 19H1V1h7l3 3M9 5h7l5 5v13H9zM15 5v6h6M12 15h6M12 19h6" /></Ico>Copy</ClipItem>
              <ClipItem><Ico w={22} h={24} s={G} sw={1.3}><path d="M1 12l8-4 6 7-5 8z" stroke="#e07b1a" fill="#fce0c4" strokeWidth="2" /><path d="M9 7l3-3 8 8-4 4zM14 5l4-4 3 3-3 5" fill="#fafafa" /></Ico>Format painter</ClipItem>
            </ClipList>
          </GroupBody>
          <GroupName>Clipboard</GroupName>
        </Group>
        {groups.map((g) => (
          <Group key={g.name} $w={g.w}>
            <GroupBody>
              {g.items.map(([ic, w, a, b, arrow, off]) => (
                <Tool key={ic} $w={w} disabled={!!off}><ToolIcon n={ic} /><span>{a}</span>{(b || arrow) && <span>{b}{arrow && <Chevron />}</span>}</Tool>
              ))}
            </GroupBody>
            <GroupName>{g.name}</GroupName>
          </Group>
        ))}
        <svg width="0" height="0"><defs>
          <linearGradient id="cpA" x1="0" y1="0" x2="0" y2="1"><stop offset="0.2" stopColor="#1b8fe8" /><stop offset="0.55" stopColor="#4fae72" /><stop offset="0.9" stopColor="#fdb813" /></linearGradient>
          <linearGradient id="cpB" x1="0" y1="0" x2="0" y2="1"><stop offset="0.3" stopColor="#c05bd0" /><stop offset="0.65" stopColor="#f4908a" /><stop offset="1" stopColor="#f79a5e" /></linearGradient>
        </defs></svg>
        <Collapse aria-label="Collapse ribbon"><Chevron dir="up" w={12} sw={1.6} /></Collapse>
      </Ribbon>

      <Main>
        <Rail>
          <RailButton $active aria-label="Report view"><Ico s="#222" sw={1.3}><path d="M2 0v18.500h18" strokeWidth="1.600" /><path d="M5 4h3v12H5zM10.500 8h3v8h-3zM16 2h3v14h-3z" /></Ico></RailButton>
          <RailButton aria-label="Table view"><Ico w={21} s="#777"><path d="M1 1h19v19H1zM1 4h19M1 9h19M1 14.500h19M7.500 4v16M13.500 4v16" strokeWidth="1.300" /></Ico></RailButton>
          <RailButton aria-label="Model view"><Ico w={24} h={24} s="#777" sw={1.3}><path d="M1 8h9v9H1zM1 11h9M14 1h9v9h-9zM14 4h9M14 14h9v9h-9zM14 17h9M5 8V4h9M5 17v4h9" /></Ico></RailButton>
          <RailButton aria-label="DAX query view"><Ico w={24} h={24} s="#777" sw={1.2}><path d="M7 13V5c0-2 1-4 3-4h5l5 6v12M14 1v6h6M20 8c2 3 2 9 0 13" /><text x="0" y="22" fontSize="9" fill="#666" stroke="none" fontWeight="700">DAX</text></Ico></RailButton>
        </Rail>

        <Center>
          <Work>
            <Canvas>
              <ReportPage>
                <PageTitle>Sales Performance Analysis: KPI Metrics &amp; Visual Mapping</PageTitle>
                <Row $pr={11} $mb={21}>
                  <Panel $w={319} $plain><Heading $big $plain>Best Selling Products</Heading><BestSelling /></Panel>
                  <Panel $w={329} $ml={16}><Heading>Sum of Revenue by Sub Category</Heading><RevenueBars /></Panel>
                  <Panel $w={331} $ml={12}><Heading>Sum of Revenue and Sum of Cost by Month</Heading><RevenueCost /></Panel>
                  <Panel $w={330} $ml={17}><Heading>Sum of Profit by Sub Category</Heading><ProfitBars /></Panel>
                </Row>
                <Row $mb={17}>
                  <Panel $w={396} $plain><Heading $plain>Sum of Revenue by Product Category</Heading><Pie /></Panel>
                  <Panel $w={327} $ml={17}><Heading>Sum of Quantity by Country and Product Category</Heading><Quantity /></Panel>
                  <Panel $w={364} $ml={18}><Heading>Sum of Profit by Month</Heading><ProfitMonth /></Panel>
                  <Slicer $w={230} $ml={13} $mt={18} $h={229} $pad="5px 5px 0 13px">
                    <SlicerHead>Sub Category</SlicerHead>
                    <SlicerBody $h={198}>
                      <div>
                        {["Select all", "", "Bike Racks", "Bike Stands", "Bottles and Cages", "Caps", "Cleaners"].map((t, i) => (
                          <CheckRow key={i} $h={i < 2 ? 29 : 31}><input type="checkbox" aria-label={blanks(t)} />{t}</CheckRow>
                        ))}
                      </div>
                      <Scroller $h={66} $mt={1} />
                    </SlicerBody>
                  </Slicer>
                </Row>
                <Row>
                  <Card $w={284} $mt={7}><CardLabel>Sum of Profit Margin</CardLabel><CardValue>382.63K</CardValue></Card>
                  <Slicer $w={146} $ml={22} $mt={1} $h={156} $pad="4px 11px 0 11px">
                    <SlicerHead as="label" htmlFor="month">&nbsp;Month</SlicerHead>
                    <SelectBox $w="100%" $h={30} $mt={6} $color="#5c5c5c"><select id="month"><option>All</option></select><Chevron w={16} sw={0.8} /></SelectBox>
                  </Slicer>
                  <Slicer $w={159} $ml={13} $mt={1} $h={156} $pad="4px 5px 0 14px">
                    <SlicerHead>Age Category<Ico w={26} h={20} s="#666"><path d="M5 6l6 6 6-6" /></Ico></SlicerHead>
                    <SlicerBody $h={130}>
                      <div>
                        {["Select all", "", "Middle Aged", "Older"].map((t, i) => (
                          <CheckRow key={i} $dim $h={i < 2 ? 29 : 31}><input type="checkbox" aria-label={blanks(t)} />{t}</CheckRow>
                        ))}
                      </div>
                      <Scroller $h={100} $mt={1} />
                    </SlicerBody>
                  </Slicer>
                  <QnA $w={234} $ml={21} $mt={1}>
                    <Ico w={18} h={36} s="#ddd" sw={1.4}><path d="M1 12h15v10H8l-4 4v-4H1z" /></Ico>
                    <QBox>
                      <textarea aria-label="Ask a question" defaultValue={"Ask a\nquestion\nabout\nyour\ndata"} />
                      <QClear aria-label="Clear"><Ico w={14} s="#b3b3b3"><path d="M1 1l12 12M13 1L1 13" /></Ico></QClear>
                      <Go aria-label="Ask"><Ico w={18} s="#fff" sw={1.5}><path d="M1 9h15M9 2l7 7-7 7" /></Ico></Go>
                    </QBox>
                    <QSide>
                      <div>
                        <Ico w={16} s="#b3b3b3"><path d="M6 10H1V4h9v3M6 7h9v7H6zM10 2h4v3M12 4l2 2 2-2" /></Ico>
                        <Ico w={15} h={16} s="#222"><circle cx="8" cy="8" r="2.500" /><circle cx="8" cy="8" r="6" strokeDasharray="2 1.500" strokeWidth="2" /></Ico>
                      </div>
                      <Ico w={10} h={4} s="#fff" sw={2}><path d="M0 2h9" /></Ico>
                    </QSide>
                  </QnA>
                  <Key $w={478} $ml={8}>
                    <VisualMenu>
                      <IconButton aria-label="Filters"><Ico s="#666"><path d="M1 2h18v2l-7 7v8l-4-2v-6L1 4z" /></Ico></IconButton>
                      <IconButton aria-label="Focus mode"><Ico s="#666" sw={1.3}><path d="M8 4H1v14h17v-7M1 12h8v6M12 3h6v6M18 3l-8 7" /></Ico></IconButton>
                      <IconButton aria-label="More options"><Ico h={4} s="none"><g fill="#555"><circle cx="2" cy="2" r="1.500" /><circle cx="10" cy="2" r="1.500" /><circle cx="18" cy="2" r="1.500" /></g></Ico></IconButton>
                    </VisualMenu>
                    <KeyTop>
                      <KeyFade />
                      <KeyTabs>
                        <KeyTab $active>Key influencers</KeyTab><KeyTab>Top segments</KeyTab>
                        <Thumbs>
                          <Ico w={18} s="#333"><path d="M1 8h4l5-7c3 0 2 4 1 6h6l-2 9H5l-4-1z" /></Ico>
                          <Ico w={18} s="#333"><path d="M1 8h4l5-7c3 0 2 4 1 6h6l-2 9H5l-4-1z" transform="rotate(180 9 9)" /></Ico>
                        </Thumbs>
                      </KeyTabs>
                      <KeyQuestion>
                        <label htmlFor="dir">What influences Profit to</label>
                        <SelectBox $w="164px" $h={28} $color="#333"><select id="dir"><option>Increase</option></select><Chevron w={16} sw={0.8} /></SelectBox>?
                      </KeyQuestion>
                    </KeyTop>
                    <KeyResult>
                      <Faded $w={283}>When</Faded><Faded $w={163}>the average of Profit</Faded>
                      <Scroller $h={18} $mt={0} $tone="#c8c8c8" />
                    </KeyResult>
                    <Grip $w={12} $h={4} $t="-2px" $l="-2px" /><Grip $w={4} $h={12} $t="-2px" $l="-2px" />
                    <Grip $w={16} $h={5} $t="-2px" $l="calc(50% - 8px)" /><Grip $w={16} $h={4} $t="calc(100% - 2px)" $l="calc(50% - 8px)" />
                    <Grip $w={4} $h={16} $t="calc(50% - 8px)" $l="-2px" /><Grip $w={3} $h={16} $t="calc(50% - 8px)" $l="calc(100% - 2px)" />
                    <Grip $w={12} $h={4} $t="calc(100% - 2px)" $l="-2px" /><Grip $w={4} $h={12} $t="calc(100% - 10px)" $l="-2px" />
                    <Grip $w={11} $h={4} $t="-2px" $l="calc(100% - 10px)" /><Grip $w={3} $h={12} $t="-2px" $l="calc(100% - 2px)" />
                    <Grip $w={11} $h={4} $t="calc(100% - 2px)" $l="calc(100% - 10px)" /><Grip $w={3} $h={12} $t="calc(100% - 10px)" $l="calc(100% - 2px)" />
                  </Key>
                </Row>
              </ReportPage>
            </Canvas>
            <Filters>
              <IconButton aria-label="Expand filters"><Doubles left /></IconButton>
              <FilterFlag><Ico w={16} s="#222" sw={1.4}><path d="M15 1v14h-2L8 10H1l1-4h6l5-5z" /></Ico></FilterFlag>
              <FiltersLabel>Filters</FiltersLabel>
            </Filters>
          </Work>
          <PageTabs>
            <ViewButton $active $mr={24} aria-label="Desktop layout"><Ico w={26} h={20} s={G} sw={1.5}><path d="M1 1h23v14H1zM12.500 15v4M8 19h9" /></Ico></ViewButton>
            <ViewButton $mr={10} aria-label="Mobile layout"><Ico w={18} h={26} s={G} sw={1.5}><rect x="1" y="1" width="15" height="24" rx="1" /><path d="M7 21h3" /></Ico></ViewButton>
            <PageArrow aria-label="Previous page"><Ico w={6} h={10} s="none"><path d="M6 0v10L0 5z" fill="#c8c6c4" /></Ico></PageArrow>
            <PageArrow aria-label="Next page"><Ico w={6} h={10} s="none"><path d="M0 0v10l6-5z" fill="#c8c6c4" /></Ico></PageArrow>
            <PageTab>Page 1</PageTab>
            <AddPage aria-label="New page"><Ico w={14} s="#fff" sw={3}><path d="M7 0v14M0 7h14" /></Ico></AddPage>
            <Watermark>خ5سات</Watermark>
          </PageTabs>
        </Center>

        <Pane $w={227}>
          <PaneHead><h2>Visualizations</h2><IconButton aria-label="Collapse"><Doubles /></IconButton></PaneHead>
          <SubHead>Format visual</SubHead>
          <ModeRow>
            <Mode aria-label="Build visual"><Ico w={31} h={32} s="#222" sw={1.3}><path d="M1 1.500h24" /><path d="M1 8h29v9H1zM1 21h29v9H1z" strokeDasharray="3 1.500" /></Ico></Mode>
            <Mode $active aria-label="Format visual"><Ico w={30} s="#222" sw={1.4}><path d="M2 25V13h8M17 8h7v4" /><rect x="10" y="2" width="7" height="20" fill={c.green} /><path d="M27 12l-9 12-3-2 10-11z" fill="#fff" /><path d="M6 28c4 0 4-5 8-6l3 3c0 4-6 4-11 3z" fill={c.green} /></Ico></Mode>
            <Mode aria-label="Analytics"><Ico w={32} s="#222" sw={1.5}><circle cx="14" cy="14" r="12.500" /><path d="M2 15l5-4 5 4 7-7 6 1M8 17v6M12 19v7M16 16v9M20 13v9" /><path d="M23 23l7 7" strokeWidth="3.500" /></Ico></Mode>
          </ModeRow>
          <svg width="100%" height="12" viewBox="0 0 226 12" fill="none" stroke="#8a8886"><path d="M0 11.500h103l10-10 10 10h103" /></svg>
          <PaneSearch><Lens flip /><BareInput placeholder="Search" aria-label="Search format options" $hint="#605e5c" /></PaneSearch>
          <VizTabs><VizTab $active>Visual</VizTab><VizTab>General</VizTab><Ico w={20} h={4} s="none"><g fill="#444"><circle cx="2" cy="2" r="1.200" /><circle cx="10" cy="2" r="1.200" /><circle cx="18" cy="2" r="1.200" /></g></Ico></VizTabs>
          {["Analysis", "Bubble visual colors", "Chart"].map((t) => <Section key={t}><Ico w={9} h={16} sw={1.3}><path d="M1 1l7 7-7 7" /></Ico>{t}</Section>)}
        </Pane>
        <Pane $w={225} $last>
          <PaneHead><h2>Data</h2><IconButton aria-label="Collapse"><Doubles /></IconButton></PaneHead>
          <DataSearch><Lens w={19} /><BareInput placeholder="Search" aria-label="Search data" $hint="#6b6b6b" /></DataSearch>
          <TreeRow>
            <Ico w={9} h={16} s="#555"><path d="M1 1l7 7-7 7" /></Ico>
            <Ico w={25} h={26} s="#333" sw={1.4}><rect x="1" y="4" width="15" height="15" rx="3" /><path d="M6 4v15M11 4v15M1 9h15M1 14h15" /><circle cx="17" cy="18" r="7.500" fill={c.green} stroke="none" /><path d="M14 18l2 2 4-4" stroke="#fff" /></Ico>
            cleaned_sales_data
          </TreeRow>
        </Pane>
      </Main>

      <Status>
        <span>Page 1 of 1</span>
        <Zoom>
          <button aria-label="Zoom out">-</button><Slider type="range" min="10" max="200" defaultValue="90" aria-label="Zoom" /><button aria-label="Zoom in">+</button>
        </Zoom>
        <span>86%</span>
        <FitButton aria-label="Fit to page"><Ico w={21} h={16} s="#605e5c" sw={1.3}><path d="M1 1h19v14H1zM4 6V4h3M17 6V4h-3M4 10v2h3M17 10v2h-3" /></Ico></FitButton>
        <StatusLink href="#update">Update available (click to download)</StatusLink>
      </Status>
    </Shell>
  );
}
